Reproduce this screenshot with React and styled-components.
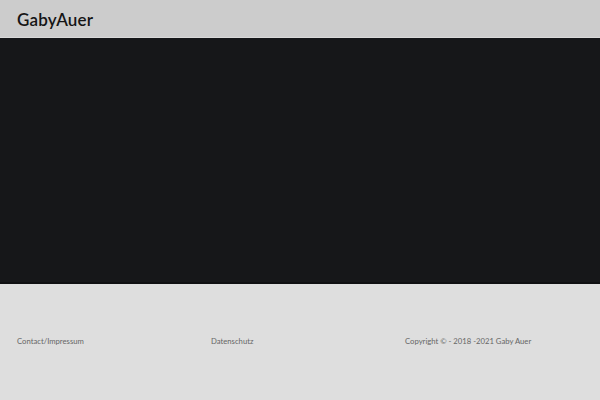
import React from "react";
import styled, { createGlobalStyle } from "styled-components";

const Global = createGlobalStyle`
  html, body { margin: 0; padding: 0; background: #dedede; }
  body { font-family: Lato, "Open Sans", sans-serif; }
`;

const Page = styled.div`
  display: flex;
  flex-direction: column;
  width: 600px;
  height: 400px;
  background: #dedede;
`;

const Header = styled.header`
  height: 37px;
  background: #cccccc;
  border-bottom: 1px solid #d9d9d9;
  display: flex;
  align-items: center;
  padding: 0 17px;
`;

const Logo = styled.div`
  font-family: Lato, sans-serif;
  font-size: 17px;
  font-weight: 600;
  color: #151515;
  letter-spacing: 0.2px;
  padding-top: 1px;
`;

const Hero = styled.section`
  height: 244px;
  background: #161719;
  border-bottom: 2px solid #0f1012;
`;

const Footer = styled.footer`
  display: grid;
  grid-template-columns: 194px 194px 194px;
  padding: 52px 17px 0;
`;

const FootItem = styled.span`
  font-family: Lato, sans-serif;
  font-size: 7.7px;
  color: #666666;
  letter-spacing: 0;
`;

export default function App() {
  return (
    <Page>
      <Global />
      <Header>
        <Logo>GabyAuer</Logo>
      </Header>
      <Hero />
      <Footer>
        <FootItem>Contact/Impressum</FootItem>
        <FootItem>Datenschutz</FootItem>
        <FootItem>Copyright © - 2018 -2021 Gaby Auer</FootItem>
      </Footer>
    </Page>
  );
}
